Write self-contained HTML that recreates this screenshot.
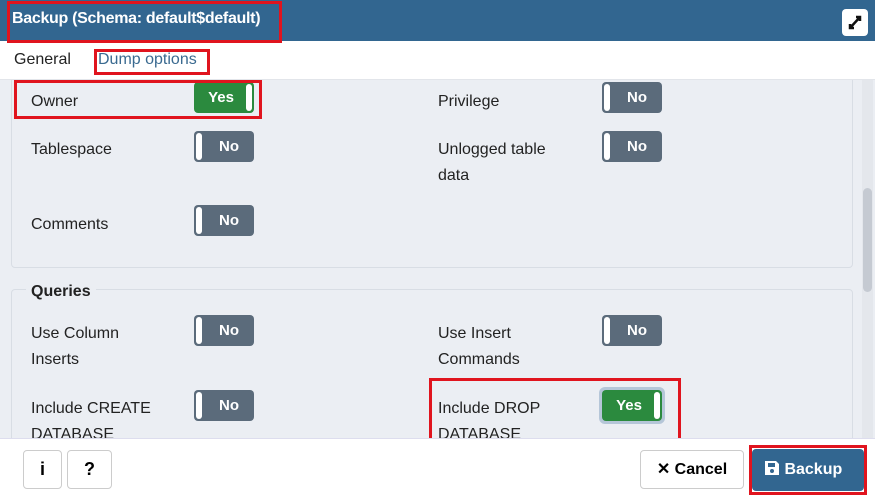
<!DOCTYPE html>
<html><head><style>
*{box-sizing:border-box;margin:0;padding:0}
body{width:875px;height:502px;overflow:hidden;font-family:"Liberation Sans",sans-serif;background:#fff;position:relative}
.a{position:absolute}
.hdr{left:0;top:0;width:875px;height:41px;background:#326690}
.lbl{font-size:16px;color:#222;line-height:26px}
.tg{width:60px;height:31px;border-radius:4px;background:#5b6b7b;color:#fff;font-weight:bold;font-size:15px}
.tg .k{position:absolute;left:2px;top:2px;width:6px;height:27px;background:#fff;border-radius:3px}
.tg span{position:absolute;left:10px;right:0;top:7px;text-align:center}
.tg.y{background:#2b8a3e}
.tg.y .k{left:auto;right:2px}
.tg.y span{left:0;right:6px}
.red{border:3px solid #e0141e}
.btn{border:1px solid #ccc;border-radius:4px;background:#fff;font-weight:bold;font-size:18px;text-align:center;line-height:37px}
</style></head><body>
<div class="a" style="left:0;top:80px;width:875px;height:358px;background:#ebeef3"></div>
<div class="a" style="left:11px;top:60px;width:842px;height:208px;border:1px solid #d8dde4;border-radius:4px"></div>
<div class="a" style="left:11px;top:289px;width:842px;height:160px;border:1px solid #d8dde4;border-radius:4px"></div>
<div class="a" style="left:0;top:41px;width:875px;height:39px;background:#fff;border-bottom:1px solid #e2e5ea"></div>
<div class="a hdr"></div>
<div class="a" style="left:12px;top:10px;color:#fff;font-weight:bold;font-size:16px;letter-spacing:-0.3px">Backup (Schema: default$default)</div>
<div class="a red" style="left:7px;top:1px;width:275px;height:42px"></div>
<div class="a" style="left:842px;top:9px;width:26px;height:27px;background:#fff;border-radius:4px">
<svg width="26" height="27" viewBox="0 0 26 27"><path d="M8 19L18 8M14 8h4v4M8 15v4h4" stroke="#111" stroke-width="2.5" fill="none"/></svg></div>
<div class="a" style="left:14px;top:51px;font-size:16px;color:#222">General</div>
<div class="a" style="left:98px;top:51px;font-size:16px;color:#3a6a90">Dump options</div>
<div class="a red" style="left:94px;top:49px;width:116px;height:26px"></div>
<div class="a" style="left:862px;top:80px;width:11px;height:358px;background:#e4e7ec"></div>
<div class="a" style="left:863px;top:188px;width:9px;height:104px;background:#c5cad2;border-radius:5px"></div>
<div class="a lbl" style="left:31px;top:89px">Owner</div>
<div class="a tg y" style="left:194px;top:82px"><div class="k"></div><span>Yes</span></div>
<div class="a red" style="left:14px;top:80px;width:248px;height:39px"></div>
<div class="a lbl" style="left:438px;top:89px">Privilege</div>
<div class="a tg" style="left:602px;top:82px"><div class="k"></div><span>No</span></div>
<div class="a lbl" style="left:31px;top:137px">Tablespace</div>
<div class="a tg" style="left:194px;top:131px"><div class="k"></div><span>No</span></div>
<div class="a lbl" style="left:438px;top:137px">Unlogged table<br>data</div>
<div class="a tg" style="left:602px;top:131px"><div class="k"></div><span>No</span></div>
<div class="a lbl" style="left:31px;top:212px">Comments</div>
<div class="a tg" style="left:194px;top:205px"><div class="k"></div><span>No</span></div>
<div class="a" style="left:26px;top:282px;padding:0 5px;background:#ebeef3;font-weight:bold;font-size:16px;color:#222;line-height:20px">Queries</div>
<div class="a lbl" style="left:31px;top:321px">Use Column<br>Inserts</div>
<div class="a tg" style="left:194px;top:315px"><div class="k"></div><span>No</span></div>
<div class="a lbl" style="left:438px;top:321px">Use Insert<br>Commands</div>
<div class="a tg" style="left:602px;top:315px"><div class="k"></div><span>No</span></div>
<div class="a lbl" style="left:31px;top:396px">Include CREATE<br>DATABASE</div>
<div class="a tg" style="left:194px;top:390px"><div class="k"></div><span>No</span></div>
<div class="a lbl" style="left:438px;top:396px">Include DROP<br>DATABASE</div>
<div class="a" style="left:599px;top:387px;width:66px;height:37px;border-radius:6px;background:#b5c6d8"></div>
<div class="a tg y" style="left:602px;top:390px"><div class="k"></div><span>Yes</span></div>
<div class="a red" style="left:429px;top:378px;width:252px;height:64px"></div>
<div class="a" style="left:0;top:438px;width:875px;height:64px;background:#fff;border-top:1px solid #dde"></div>
<div class="a btn" style="left:23px;top:450px;width:39px;height:39px">i</div>
<div class="a btn" style="left:67px;top:450px;width:45px;height:39px">?</div>
<div class="a btn" style="left:640px;top:450px;width:104px;height:39px;font-size:16px">✕ Cancel</div>
<div class="a" style="left:749px;top:445px;width:118px;height:50px;border:3px solid #e0141e"></div>
<div class="a" style="left:752px;top:449px;width:112px;height:42px;background:#326690;border-radius:4px;color:#fff;font-weight:bold;font-size:16px;line-height:42px;padding-left:12px">
<svg width="16" height="16" viewBox="0 0 16 16" style="vertical-align:-2px"><path d="M1 1h11l3 3v11H1z" fill="#fff"/><rect x="4" y="3" width="7" height="4" fill="#326690"/><circle cx="8" cy="11" r="2" fill="#326690"/></svg> Backup</div>
</body></html>
